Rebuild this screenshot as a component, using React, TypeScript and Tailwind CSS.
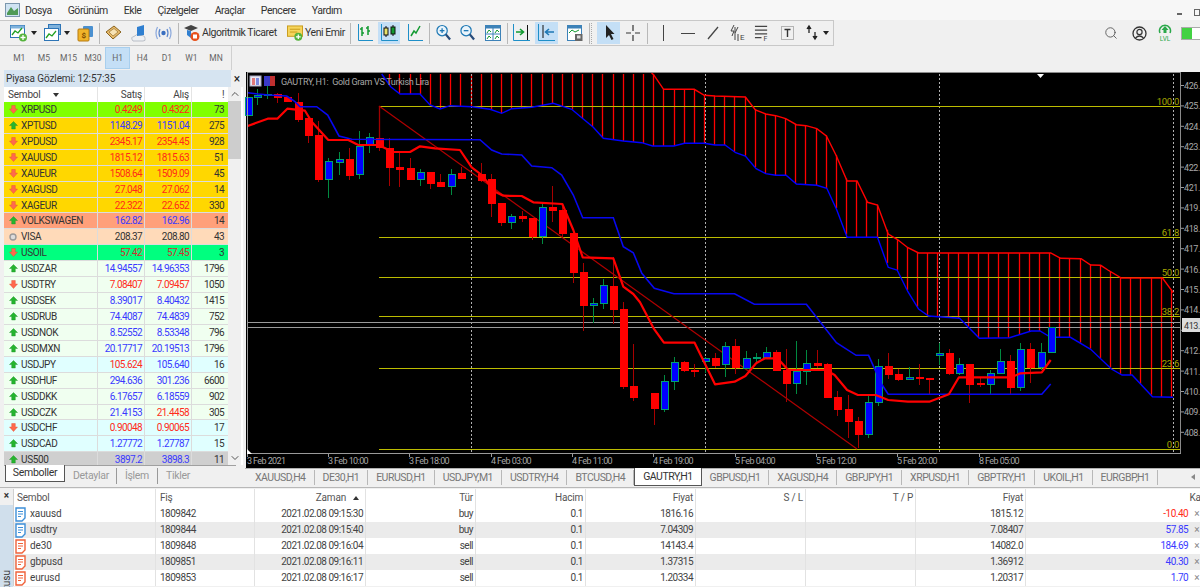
import React from 'react';
import { ChevronUp, ChevronDown, Search } from 'lucide-react';

type Pt = [number, number];
type Dir = 'up' | 'down' | 'flat';

const z7 = (p: Pt[]): Pt[] => p.map(([x, y]) => [245 + x / 3, 70 + y / 3]);
const z9 = (p: Pt[]): Pt[] => p.map(([x, y]) => [640 + x / 2.8, 270 + y / 3]);
const z10 = (p: Pt[]): Pt[] => p.map(([x, y]) => [640 + x / 2.8, 70 + y / 3]);
const line = (p: Pt[]) => p.map(([x, y]) => `${x.toFixed(1)},${y.toFixed(1)}`).join(' ');

const kijun: Pt[] = [
  ...z7([[8, 68], [40, 72], [70, 75], [125, 78], [150, 95], [165, 110], [215, 110], [248, 135], [282, 198], [320, 208], [705, 209], [740, 240], [770, 252], [830, 255], [860, 288], [920, 293], [950, 315], [985, 375], [1013, 443], [1105, 443], [1135, 530], [1165, 548]]),
  ...z9([[5, 10], [40, 55], [95, 71], [265, 71], [320, 103], [466, 103], [550, 218], [605, 256], [640, 256], [675, 340], [695, 373], [1125, 373], [1150, 342]]),
];

const tenkan: Pt[] = [
  ...z7([[8, 168], [68, 146], [97, 146], [127, 116], [180, 122], [200, 155], [250, 210], [310, 210], [340, 225], [400, 225], [445, 246], [495, 246], [525, 229], [570, 235], [645, 240], [680, 292], [710, 315], [750, 365], [775, 377], [830, 378], [865, 397], [952, 402], [985, 480], [1013, 562], [1105, 565], [1135, 650], [1165, 672]]),
  ...z9([[0, 97], [38, 175], [67, 218], [153, 218], [210, 343], [265, 335], [295, 318], [325, 280], [350, 265], [385, 265], [415, 300], [520, 300], [545, 315], [580, 360], [610, 375], [660, 375], [695, 390], [750, 395], [810, 395], [865, 373], [893, 322], [1040, 322], [1065, 310], [1125, 307], [1150, 270]]),
];

const spanBlue: Pt[] = [
  ...z7([[410, 12], [437, 50], [465, 72], [525, 72], [555, 105], [585, 117], [615, 107], [680, 110], [735, 118], [770, 130], [800, 116], [860, 112], [925, 100], [980, 118], [1015, 147], [1045, 172], [1075, 205], [1135, 213], [1190, 218]]),
  ...z10([[35, 228], [95, 228], [125, 220], [180, 220], [210, 225], [238, 225], [268, 248], [295, 258], [325, 296], [352, 311], [380, 316], [409, 316], [438, 342], [495, 346], [523, 355], [551, 420], [580, 502], [665, 502], [695, 592]]),
  ...z9([[720, 0], [750, 65], [780, 117], [808, 138], [895, 145], [950, 205], [1035, 203], [1095, 183], [1120, 183], [1150, 202], [1205, 202], [1262, 238], [1320, 297], [1350, 315], [1378, 315], [1435, 380], [1493, 382]]),
];

const spanRed: Pt[] = [
  [651.5, 73],
  ...z10([[38, 14], [66, 58], [152, 58], [180, 76], [210, 78], [295, 81], [323, 120], [352, 132], [380, 137], [408, 146], [438, 164], [465, 167], [495, 176], [522, 198], [550, 258], [580, 333], [608, 333], [637, 397], [665, 405], [695, 492], [720, 508], [750, 533], [780, 549], [1150, 549], [1178, 565], [1235, 566], [1262, 585], [1290, 586]]),
  ...z9([[1310, 0], [1348, 24], [1463, 24], [1493, 68]]),
];

// y on a polyline at x, for the cloud hatching
function yAt(p: Pt[], x: number) {
  for (let i = 1; i < p.length; i++) {
    if (x <= p[i][0]) {
      const [x0, y0] = p[i - 1];
      const [x1, y1] = p[i];
      return y0 + ((y1 - y0) * (x - x0)) / (x1 - x0);
    }
  }
  return p[p.length - 1][1];
}

const hatches = Array.from({ length: 78 }, (_, i) => 389.3 + i * 10.15).map((x) => {
  const top = x < 651 ? 74 : Math.max(74, yAt(spanRed, x));
  return { x: Math.round(x) + 0.5, top, bottom: yAt(spanBlue, x) };
});

// x, body top, body bottom, wick top, wick bottom
type C = [number, number, number, number, number];
const c7: C[] = [
  [10, 82, 135, 82, 135], [37, 75, 82, 58, 106], [67, 72, 75, 48, 88], [97, 72, 82, 70, 100], [127, 82, 95, 80, 97], [158, 97, 147, 68, 155],
  [189, 145, 197, 145, 220], [220, 197, 327, 152, 335], [250, 275, 327, 265, 385], [281, 268, 276, 245, 316], [311, 268, 315, 235, 330], [342, 228, 312, 183, 327],
  [372, 203, 223, 188, 250], [403, 205, 233, 205, 243], [433, 234, 291, 205, 347], [463, 291, 297, 250, 352], [494, 294, 328, 265, 330], [525, 306, 327, 297, 348],
  [556, 306, 339, 305, 358], [586, 338, 350, 312, 352], [617, 312, 348, 296, 374], [647, 311, 326, 290, 328], [708, 312, 330, 280, 335], [738, 328, 401, 312, 442],
  [769, 399, 458, 399, 468], [799, 440, 457, 433, 478], [830, 438, 446, 424, 456], [860, 444, 499, 444, 510], [891, 411, 499, 398, 522], [922, 411, 421, 347, 455],
  [952, 420, 490, 410, 500], [983, 490, 608, 490, 638],
];
const c8: C[] = [
  [1013, 7, 107, -20, 182], [1044, 100, 106, 85, 160], [1074, 47, 101, 28, 116], [1105, 48, 119, -40, 162], [1135, 118, 350, 97, 357], [1165, 348, 383, 222, 392],
];
const c9: C[] = [
  [10, 370, 385, 342, 430], [39, 370, 416, 370, 465], [68, 333, 418, 315, 425], [96, 278, 334, 262, 360], [124, 278, 302, 272, 306], [152, 300, 304, 282, 320],
  [181, 265, 274, 260, 310], [210, 266, 285, 250, 295], [238, 229, 284, 215, 320], [267, 228, 293, 208, 312], [296, 265, 294, 243, 298], [324, 262, 264, 250, 280],
  [352, 246, 262, 230, 265], [381, 246, 300, 240, 300], [409, 300, 340, 238, 396], [438, 305, 340, 213, 372], [466, 280, 304, 240, 345], [495, 281, 285, 240, 295],
  [523, 283, 381, 278, 382], [552, 381, 418, 362, 438], [581, 418, 455, 375, 505], [609, 453, 492, 440, 535], [638, 398, 492, 378, 503], [666, 288, 398, 266, 407],
  [695, 288, 314, 250, 326], [723, 312, 329, 296, 332], [752, 322, 328, 292, 330], [780, 322, 326, 283, 345], [808, 325, 329, 325, 372], [837, 251, 257, 220, 285],
  [865, 250, 310, 238, 315], [894, 284, 310, 265, 315], [922, 283, 342, 283, 400], [951, 340, 344, 325, 350], [979, 311, 343, 300, 372], [1008, 274, 310, 238, 312],
  [1036, 274, 351, 256, 372], [1065, 239, 351, 220, 362], [1093, 238, 291, 218, 340], [1122, 248, 291, 218, 300], [1151, 173, 247, 173, 250],
];
const upIdx7 = new Set([10, 37, 67, 250, 281, 342, 372, 525, 617, 799, 891]);
const upIdx8 = new Set([1044, 1074]);
const upIdx9 = new Set([10, 68, 96, 181, 238, 296, 324, 352, 438, 466, 638, 666, 752, 837, 894, 979, 1008, 1065, 1122, 1151]);

const candles = [
  ...c7.map(([x, a, b, c, d]) => ({ x: Math.round(245 + x / 3), bt: 70 + a / 3, bb: 70 + b / 3, wt: 70 + c / 3, wb: 70 + d / 3, up: upIdx7.has(x) })),
  ...c8.map(([x, a, b, c, d]) => ({ x: Math.round(245 + x / 3), bt: 270 + a / 3, bb: 270 + b / 3, wt: 270 + c / 3, wb: 270 + d / 3, up: upIdx8.has(x) })),
  ...c9.slice(1).map(([x, a, b, c, d]) => ({ x: Math.round(640 + x / 2.8), bt: 270 + a / 3, bb: 270 + b / 3, wt: 270 + c / 3, wb: 270 + d / 3, up: upIdx9.has(x) })),
];

const fibs: [number, string][] = [[106, '100.0'], [237, '61.8'], [277.5, '50.0'], [316, '38.2'], [368.5, '23.6'], [449.5, '0.0']];
const prices = ['426.', '425.', '424.', '423.', '422.', '421.', '419.', '418.', '417.', '416.', '415.', '414.', '', '412.', '411.', '410.', '409.', '408.'];
const times: [number, string][] = [[247, '3 Feb 2021'], [328, '3 Feb 10:00'], [409, '3 Feb 18:00'], [491, '4 Feb 03:00'], [572, '4 Feb 11:00'], [653, '4 Feb 19:00'], [735, '5 Feb 04:00'], [816, '5 Feb 12:00'], [897, '5 Feb 20:00'], [979, '8 Feb 05:00']];

function Chart() {
  return (
    <svg viewBox="245 70 955 398" className="block w-[955px] h-[398px] bg-black" fontFamily="Roboto, sans-serif">
      <rect x="245" y="70" width="955" height="2" fill="#f0f0f0" />
      <rect x="245" y="70" width="1" height="398" fill="#f0f0f0" />
      {hatches.map((h) => (
        <line key={h.x} x1={h.x} x2={h.x} y1={h.top} y2={h.bottom} stroke="#ff0000" strokeWidth="1.3" />
      ))}
      <g shapeRendering="crispEdges">
        {[471.5, 705.5, 939.5, 1173.5].map((x) => (
          <line key={x} x1={x} x2={x} y1="74" y2="453" stroke="#b0b0b0" strokeDasharray="2 2" />
        ))}
        {fibs.map(([y]) => (
          <line key={y} x1="379" x2="1180" y1={Math.floor(y) + 0.5} y2={Math.floor(y) + 0.5} stroke="#bcbc00" />
        ))}
        <line x1="247" x2="1180" y1="322.5" y2="322.5" stroke="#9a9a9a" />
        <line x1="247" x2="1180" y1="327.5" y2="327.5" stroke="#9a9a9a" />
      </g>
      <line x1="379.5" x2="379.5" y1="106" y2="140" stroke="#a00000" strokeWidth="1.3" />
      <line x1="379" y1="106" x2="857" y2="449" stroke="#b00000" strokeWidth="1.2" />
      <polyline points={line(spanRed)} fill="none" stroke="#ff0000" strokeWidth="1.4" />
      <polyline points={line(spanBlue)} fill="none" stroke="#0000ff" strokeWidth="1.4" />
      <g shapeRendering="crispEdges">
        {candles.map((c) => (
          <line key={`w${c.x}`} x1={c.x + 0.5} x2={c.x + 0.5} y1={c.wt} y2={c.wb} stroke={c.up ? '#008a40' : '#a80000'} />
        ))}
        {candles.map((c) => (
          <rect
            key={c.x}
            x={c.x - 3}
            y={c.bt}
            width="7"
            height={Math.max(c.bb - c.bt, 1)}
            fill={c.up ? '#0000ff' : '#ff0000'}
            stroke={c.up ? '#00a070' : '#ff0000'}
          />
        ))}
      </g>
      <polyline points={line(kijun)} fill="none" stroke="#0808f0" strokeWidth="1.6" />
      <polyline points={line(tenkan)} fill="none" stroke="#ff0000" strokeWidth="2.2" strokeLinejoin="round" />

      {/* title */}
      <rect x="250" y="76" width="11" height="10" fill="#e8e8f4" stroke="#a8a8c0" />
      <rect x="252" y="78" width="3" height="7" fill="#e07a7a" />
      <rect x="256" y="78" width="3" height="7" fill="#7a8ae0" />
      <rect x="264" y="76" width="6" height="10" fill="#3a3ac8" />
      <rect x="270" y="76" width="5" height="10" fill="#c03030" />
      <text x="281" y="85" fontSize="9" letterSpacing="-0.3" fill="#a8a8a8">{'GAUTRY, H1:\u00a0\u00a0Gold Gram VS Turkish Lira'}</text>
      <polygon points="1037,74 1044,74 1040.5,78" fill="#ffffff" />

      {fibs.map(([y, t]) => (
        <text key={t} x="1179" y={Math.floor(y) - 1} fontSize="9.5" letterSpacing="-0.3" textAnchor="end" fill="#a8a800">{t}</text>
      ))}

      {/* axes */}
      <rect x="247" y="72" width="933" height="1" fill="#8a8a8a" />
      <rect x="247" y="72" width="1" height="382" fill="#9a9a9a" />
      <rect x="1180" y="72" width="1" height="382" fill="#8a8a8a" />
      <rect x="247" y="453" width="934" height="1" fill="#9a9a9a" />
      {prices.map((p, i) => (
        <g key={i}>
          <rect x="1181" y={85 + i * 20.4} width="3" height="1" fill="#9a9a9a" />
          {p && <text x="1184" y={89 + i * 20.4} fontSize="9" letterSpacing="-0.4" fill="#a8a8a8">{p}</text>}
        </g>
      ))}
      <rect x="1182" y="318" width="18" height="14" fill="#dcdcdc" />
      <text x="1184" y="328.5" fontSize="9" letterSpacing="-0.4" fill="#333333">413.</text>
      {times.map(([x, t]) => (
        <g key={t}>
          <rect x={x} y="454" width="1" height="3" fill="#9a9a9a" />
          <text x={x} y="464" fontSize="9" letterSpacing="-0.6" fill="#a8a8a8">{t}</text>
        </g>
      ))}
      <polygon points="247,449 247,454 252,454" fill="#ffffff" />
    </svg>
  );
}

/* toolbar drawings */
function Ico({ children, w = 18 }: { children: React.ReactNode; w?: number }) {
  return (
    <svg width={w} height="18" viewBox={`0 0 ${w} 18`} fill="none" className="block">
      {children}
    </svg>
  );
}

function ChartFrame({ plus }: { plus?: boolean }) {
  return (
    <Ico>
      {!plus && <rect x="4.5" y="0.5" width="12" height="10" fill="#7fb2dc" stroke="#2e75b6" />}
      <rect x="0.5" y={plus ? 1.5 : 4.5} width="14" height="12" fill="#fff" stroke="#2e75b6" />
      {plus && <rect x="0.5" y="1.5" width="14" height="3" fill="#7fb2dc" />}
      <path d={plus ? 'M2 11 L5 7 L8 9 L12 4' : 'M2 14 L5 10 L8 12 L12 7'} stroke="#22a022" strokeWidth="1.3" />
      {plus && (
        <>
          <circle cx="13" cy="13.5" r="4" fill="#55b33c" />
          <path d="M13 11 V16 M10.5 13.5 H15.5" stroke="#fff" strokeWidth="1.3" />
        </>
      )}
    </Ico>
  );
}

function Caret() {
  return <span className="block w-0 h-0 border-x-[3px] border-x-transparent border-t-[4px] border-t-[#222]" />;
}

function Sep({ cls }: { cls: string }) {
  return <div className={`w-px h-[21px] bg-[#b8b8b8] ${cls}`} />;
}

function Slot({ cls, children, hl }: { cls: string; children?: React.ReactNode; hl?: boolean }) {
  return (
    <div className={`flex items-center justify-center shrink-0 h-[22px] ${hl ? 'bg-[#c4dff6]' : ''} ${cls}`}>{children}</div>
  );
}

const BarsStroke = '#1e8fc8';

function MainToolbar() {
  return (
    <div className="flex h-[26px] w-[834px] items-center pl-[10px] border-t border-b border-r border-[#c8c8c8] bg-[#f0f0f0] text-[#333] text-[10.5px] tracking-[-0.45px]">
      <Slot cls="w-[18px]"><ChartFrame plus /></Slot>
      <Slot cls="w-[10px] ml-[1px]"><Caret /></Slot>
      <Slot cls="w-[19px] ml-[4px]"><ChartFrame plus={false} /></Slot>
      <Slot cls="w-[10px]"><Caret /></Slot>
      <Slot cls="w-[17px] ml-[5px]">
        <Ico w={17}>
          <rect x="6" y="2" width="10" height="11" rx="1" fill="#4a90d0" />
          <rect x="1" y="5" width="11" height="12" rx="1" fill="#f0b429" stroke="#b77a10" />
          <text x="6.5" y="14" fontSize="8" textAnchor="middle" fill="#7a4a00" fontWeight="700">$</text>
        </Ico>
      </Slot>
      <Sep cls="ml-[5px]" />
      <Slot cls="w-[17px] ml-[5px]">
        <Ico w={17}>
          <path d="M1 8 L9 2 L16 8 L8 15 Z" fill="#e6b96a" stroke="#8a6420" />
          <path d="M4 8 L9 4.5 L13 8 L8 12 Z" fill="#f8e3b4" stroke="#8a6420" strokeWidth="0.6" />
        </Ico>
      </Slot>
      <Slot cls="w-[18px] ml-[8px]">
        <Ico>
          <path d="M3 17 Q0 13 4 12.5 Q6 9.5 10 11.5 Q15 11 15 14.5 Q16 17 13 17 Z" fill="#eef0f3" stroke="#b9bec6" />
          <path d="M7 3 L14 1 V11 L7 12 Z" fill="#2f7fd0" />
        </Ico>
      </Slot>
      <Slot cls="w-[17px] ml-[7px]">
        <Ico w={17}>
          <circle cx="8.5" cy="9" r="2.2" fill="#3a6fc0" />
          <path d="M5 5 Q3 9 5 13 M12 5 Q14 9 12 13" stroke="#5a86cc" strokeWidth="1.2" />
          <path d="M2.5 3 Q-0.5 9 2.5 15 M14.5 3 Q17.5 9 14.5 15" stroke="#8aa8dc" strokeWidth="1.2" />
        </Ico>
      </Slot>
      <Sep cls="ml-[6px]" />
      <Slot cls="w-[16px] ml-[5px]">
        <Ico w={16}>
          <path d="M0 4 L7 1 L14 4 L7 7 Z" fill="#444" />
          <path d="M3 6 V11 L7 14 V7 Z" fill="#2f7fd0" />
          <circle cx="11" cy="12.5" r="4.5" fill="#e8501a" />
          <rect x="9" y="10.5" width="4" height="4" fill="#fff" />
        </Ico>
      </Slot>
      <span className="ml-[2px] w-[76px] whitespace-nowrap shrink-0">Algoritmik Ticaret</span>
      <Slot cls="w-[16px] ml-[9px]">
        <Ico w={17}>
          <rect x="0.5" y="1.5" width="16" height="11" fill="#f6d55c" stroke="#c79a18" />
          <path d="M3 5 H14 M3 8 H11" stroke="#c79a18" />
          <circle cx="12" cy="13" r="4.2" fill="#55b33c" />
          <path d="M12 10.5 V15.5 M9.5 13 H14.5" stroke="#fff" strokeWidth="1.3" />
        </Ico>
      </Slot>
      <span className="ml-[2px] w-[39px] whitespace-nowrap shrink-0">Yeni Emir</span>
      <Sep cls="ml-[6px]" />
      <Slot cls="w-[15px] ml-[7px]">
        <Ico w={15}>
          <path d="M4 3 V12 M2 5 H4 M4 9 H6 M10 2 V11 M8 4 H10 M10 7 H12" stroke="#129a30" strokeWidth="1.5" />
          <path d="M0.5 0 V16.5 H15" stroke={BarsStroke} />
        </Ico>
      </Slot>
      <Slot cls="w-[22px] ml-[5px]" hl>
        <Ico w={17}>
          <path d="M5 2 V13 M12 1 V12" stroke="#111" />
          <rect x="3" y="4" width="4" height="7" fill="#e9e36a" stroke="#111" />
          <rect x="10" y="3" width="4" height="7" fill="#129a30" stroke="#111" />
          <path d="M0.5 0 V16.5 H17" stroke={BarsStroke} />
        </Ico>
      </Slot>
      <Slot cls="w-[15px] ml-[8px]">
        <Ico w={15}>
          <path d="M3 12 L6 7 L8 9 L12 2" stroke="#129a30" strokeWidth="1.5" />
          <path d="M0.5 0 V16.5 H15" stroke={BarsStroke} />
        </Ico>
      </Slot>
      <Sep cls="ml-[6px]" />
      {['+', '-'].map((s, i) => (
        <Slot key={s} cls={`w-[15px] ${i === 0 ? 'ml-[6px]' : 'ml-[9px]'}`}>
          <Ico w={16}>
            <circle cx="6.5" cy="6.5" r="5.5" fill="#eaf4fb" stroke="#1e78b4" strokeWidth="1.3" />
            <path d="M4 6.5 H9" stroke="#1e78b4" strokeWidth="1.4" />
            {s === '+' && <path d="M6.5 4 V9" stroke="#1e78b4" strokeWidth="1.4" />}
            <path d="M10.5 10.5 L15 16" stroke="#274b7a" strokeWidth="2.4" />
          </Ico>
        </Slot>
      ))}
      <Slot cls="w-[16px] ml-[10px]">
        <Ico w={16}>
          <rect x="0.5" y="1.5" width="15" height="15" fill="#fff" stroke="#3d82b8" />
          <rect x="0.5" y="1.5" width="15" height="3" fill="#3d82b8" />
          <path d="M8 4 V16 M1 10 H15" stroke="#3d82b8" />
          <path d="M2 9 L4 6 L6 8 M10 9 L12 6 L14 8 M2 15 L4 12 L6 14 M10 15 L12 12 L14 14" stroke="#129a30" />
        </Ico>
      </Slot>
      <Sep cls="ml-[6px]" />
      <Slot cls="w-[17px] ml-[5px]">
        <Ico w={17}>
          <path d="M3 8 H10 M7 5 L10.5 8 L7 11" stroke="#129a30" strokeWidth="1.6" />
          <path d="M14.5 1 V16" stroke="#111" />
          <path d="M0.5 0 V16.5 H17" stroke={BarsStroke} />
        </Ico>
      </Slot>
      <Slot cls="w-[23px] ml-[5px]" hl>
        <Ico w={17}>
          <path d="M16 8 H8 M11 5 L7.5 8 L11 11" stroke="#1e78b4" strokeWidth="1.6" />
          <path d="M5 1 V14" stroke="#111" />
          <path d="M0.5 0 V16.5 H17" stroke={BarsStroke} />
        </Ico>
      </Slot>
      <Slot cls="w-[16px] ml-[9px]">
        <Ico w={16}>
          <rect x="0.5" y="1.5" width="14" height="15" fill="#fff" stroke="#3d82b8" />
          <rect x="0.5" y="1.5" width="14" height="3" fill="#3d82b8" />
          <path d="M2 9 L5 6 L8 8 L12 6" stroke="#129a30" />
          <rect x="8" y="10" width="7.5" height="7" fill="#666" />
          <rect x="10" y="11.5" width="3.5" height="3" fill="#ddd" />
        </Ico>
      </Slot>
      <Sep cls="ml-[6px]" />
      <div className="w-px h-[21px] border-l border-dotted border-[#aaa] ml-px" />
      <Slot cls="w-[23px] ml-[5px]" hl>
        <Ico w={12}>
          <path d="M3 1 L3 14 L6 11 L8.5 16 L10.5 15 L8 10 L11.5 10 Z" fill="#222" />
        </Ico>
      </Slot>
      <Slot cls="w-[16px] ml-[5px]">
        <Ico w={16}>
          <path d="M8 1 V7 M8 11 V17 M1 9 H6 M10 9 H15" stroke="#333" strokeWidth="1.2" />
        </Ico>
      </Slot>
      <Sep cls="ml-[6px]" />
      <Slot cls="w-[14px] ml-[8px]"><div className="w-px h-[16px] bg-[#444]" /></Slot>
      <Slot cls="w-[14px] ml-[11px]"><div className="w-[14px] h-px bg-[#444]" /></Slot>
      <Slot cls="w-[12px] ml-[12px]">
        <Ico w={12}><path d="M1 15 L11 3" stroke="#444" strokeWidth="1.3" /></Ico>
      </Slot>
      <Slot cls="w-[16px] ml-[11px]">
        <Ico w={16}>
          <path d="M4 1 L1 7 H4 L2 12 M8 3 L5 9 M5 3 V16 M8 10 V17" stroke="#444" />
          <text x="10" y="16" fontSize="8" fill="#444">E</text>
        </Ico>
      </Slot>
      <Slot cls="w-[15px] ml-[8px]">
        <Ico w={16}>
          <path d="M1 2 H14 M1 6 H14 M1 10 H14 M1 14 H8" stroke="#444" strokeWidth="1.3" />
          <text x="10" y="18" fontSize="7.5" fill="#444">F</text>
        </Ico>
      </Slot>
      <Slot cls="w-[13px] ml-[12px]">
        <Ico w={13}>
          <rect x="0.5" y="2.5" width="12" height="13" stroke="#777" strokeDasharray="1 1" />
          <path d="M3.5 5.5 H9.5 M6.5 5.5 V13" stroke="#333" strokeWidth="1.4" />
        </Ico>
      </Slot>
      <Slot cls="w-[12px] ml-[12px]">
        <Ico w={12}>
          <path d="M3 9 V4 M1 5 L3 2 L5 5" stroke="#222" strokeWidth="1.3" fill="#222" />
          <path d="M9 8 V13 M7 12 L9 15 L11 12" stroke="#222" strokeWidth="1.3" fill="#222" />
        </Ico>
      </Slot>
      <Slot cls="w-[8px] ml-[4px]"><Caret /></Slot>
    </div>
  );
}

const frames = ['M1', 'M5', 'M15', 'M30', 'H1', 'H4', 'D1', 'W1', 'MN'];

function FrameBar() {
  return (
    <div className="flex h-[24px] w-[232px] items-center pl-[7px] border-r border-[#d0d0d0] text-[8.5px] text-[#666]">
      {frames.map((f) => (
        <div
          key={f}
          className={`w-[24.6px] h-[22px] flex items-center justify-center ${f === 'H1' ? 'bg-[#c4dff6] border border-[#a8cfee]' : ''}`}
        >
          {f}
        </div>
      ))}
    </div>
  );
}

/* market watch */
const rowColors = {
  lime: 'bg-[#80ff00]',
  gold: 'bg-[#ffd700]',
  salmon: 'bg-[#ffa07a]',
  peach: 'bg-[#ffdab9]',
  spring: 'bg-[#00ff7f]',
  honey: 'bg-[#f0fff0]',
  cyan: 'bg-[#e0ffff]',
  grey: 'bg-[#cfcfcf]',
};

type Quote = { s: string; b: string; a: string; n: string; d: Dir; bg: keyof typeof rowColors; bc: string; ac: string };
const R = 'text-[#ff2a1a]';
const B = 'text-[#3a3aff]';
const K = 'text-[#333]';

const quotes: Quote[] = [
  { s: 'XRPUSD', b: '0.4249', a: '0.4322', n: '73', d: 'down', bg: 'lime', bc: R, ac: R },
  { s: 'XPTUSD', b: '1148.29', a: '1151.04', n: '275', d: 'up', bg: 'gold', bc: B, ac: B },
  { s: 'XPDUSD', b: '2345.17', a: '2354.45', n: '928', d: 'down', bg: 'gold', bc: R, ac: R },
  { s: 'XAUUSD', b: '1815.12', a: '1815.63', n: '51', d: 'down', bg: 'gold', bc: R, ac: R },
  { s: 'XAUEUR', b: '1508.64', a: '1509.09', n: '45', d: 'down', bg: 'gold', bc: R, ac: R },
  { s: 'XAGUSD', b: '27.048', a: '27.062', n: '14', d: 'down', bg: 'gold', bc: R, ac: R },
  { s: 'XAGEUR', b: '22.322', a: '22.652', n: '330', d: 'down', bg: 'gold', bc: R, ac: R },
  { s: 'VOLKSWAGEN', b: '162.82', a: '162.96', n: '14', d: 'up', bg: 'salmon', bc: B, ac: B },
  { s: 'VISA', b: '208.37', a: '208.80', n: '43', d: 'flat', bg: 'peach', bc: K, ac: K },
  { s: 'USOIL', b: '57.42', a: '57.45', n: '3', d: 'down', bg: 'spring', bc: 'text-[#d03030]', ac: 'text-[#d03030]' },
  { s: 'USDZAR', b: '14.94557', a: '14.96353', n: '1796', d: 'up', bg: 'honey', bc: B, ac: B },
  { s: 'USDTRY', b: '7.08407', a: '7.09457', n: '1050', d: 'down', bg: 'honey', bc: R, ac: R },
  { s: 'USDSEK', b: '8.39017', a: '8.40432', n: '1415', d: 'up', bg: 'honey', bc: B, ac: B },
  { s: 'USDRUB', b: '74.4087', a: '74.4839', n: '752', d: 'up', bg: 'honey', bc: B, ac: B },
  { s: 'USDNOK', b: '8.52552', a: '8.53348', n: '796', d: 'up', bg: 'honey', bc: B, ac: B },
  { s: 'USDMXN', b: '20.17717', a: '20.19513', n: '1796', d: 'up', bg: 'honey', bc: B, ac: B },
  { s: 'USDJPY', b: '105.624', a: '105.640', n: '16', d: 'up', bg: 'cyan', bc: R, ac: B },
  { s: 'USDHUF', b: '294.636', a: '301.236', n: '6600', d: 'up', bg: 'honey', bc: B, ac: B },
  { s: 'USDDKK', b: '6.17657', a: '6.18559', n: '902', d: 'up', bg: 'honey', bc: B, ac: B },
  { s: 'USDCZK', b: '21.4153', a: '21.4458', n: '305', d: 'up', bg: 'honey', bc: B, ac: R },
  { s: 'USDCHF', b: '0.90048', a: '0.90065', n: '17', d: 'down', bg: 'cyan', bc: R, ac: R },
  { s: 'USDCAD', b: '1.27772', a: '1.27787', n: '15', d: 'up', bg: 'cyan', bc: B, ac: B },
  { s: 'US500', b: '3897.2', a: '3898.3', n: '11', d: 'up', bg: 'grey', bc: B, ac: B },
];

function Arrow({ d }: { d: Dir }) {
  if (d === 'flat') {
    return (
      <svg width="8" height="8" viewBox="0 0 8 8" className="block">
        <circle cx="4" cy="4" r="3" fill="#dcdcdc" stroke="#9a9a9a" strokeWidth="1.4" />
      </svg>
    );
  }
  return (
    <svg width="9" height="9" viewBox="0 0 9 9" className="block">
      {d === 'up' ? (
        <polygon points="4.5,0.5 8.5,4.5 6.3,4.5 6.3,8 2.7,8 2.7,4.5 0.5,4.5" fill="#25b52e" stroke="#1a8f24" strokeWidth="0.4" />
      ) : (
        <polygon points="2.7,0.5 6.3,0.5 6.3,4 8.5,4 4.5,8.5 0.5,4 2.7,4" fill="#ff6a4d" stroke="#e04a30" strokeWidth="0.4" />
      )}
    </svg>
  );
}

const mwCols = 'grid grid-cols-[94px_47px_47px_36px] items-center';

function MarketWatch() {
  return (
    <div className="w-[245px] shrink-0 flex flex-col pl-[4px] pr-[2px] h-full">
      <div className="h-[17px] flex items-center">
        <div className="flex-1 h-full flex items-center bg-[#d6e4f1] pl-[2px] text-[10px] tracking-[-0.1px] text-[#333]">
          Piyasa Gözlemi: 12:57:35
        </div>
        <div className="w-[12px] text-center text-[12px] leading-[12px] text-[#222]">×</div>
      </div>
      <div className="flex flex-1 min-h-0 bg-white">
        <div className="w-[224px] shrink-0 overflow-hidden text-[10px] tracking-[-0.6px]">
          <div className={`h-[15px] ${mwCols} text-[#444] bg-white`}>
            <div className="pl-[4px] flex items-center gap-[12px] border-r border-[#e4e4e4] h-full tracking-[-0.2px]">
              Sembol
              <span className="block w-0 h-0 border-x-[3px] border-x-transparent border-t-[4px] border-t-[#333]" />
            </div>
            <div className="text-right pr-[2px] border-r border-[#e4e4e4] h-full leading-[15px] tracking-[-0.2px]">Satış</div>
            <div className="text-right pr-[2px] border-r border-[#e4e4e4] h-full leading-[15px] tracking-[-0.2px]">Alış</div>
            <div className="text-right pr-[4px] h-full leading-[15px]">!</div>
          </div>
          {quotes.map((q) => (
            <div key={q.s} className={`h-[15.93px] leading-[15px] ${mwCols} border-b border-[#dcdcdc] ${rowColors[q.bg]}`}>
              <div className="pl-[4px] flex items-center gap-[3px] text-[#333] border-r border-[#dcdcdc] h-full tracking-[-0.35px]">
                <span className="w-[10px] flex justify-center"><Arrow d={q.d} /></span>
                {q.s}
              </div>
              <div className={`text-right pr-[2px] border-r border-[#dcdcdc] h-full ${q.bc}`}>{q.b}</div>
              <div className={`text-right pr-[2px] border-r border-[#dcdcdc] h-full ${q.ac}`}>{q.a}</div>
              <div className="text-right pr-[4px] text-[#333] h-full">{q.n}</div>
            </div>
          ))}
        </div>
        <div className="w-[13px] shrink-0 bg-[#f0f0f0] flex flex-col items-center">
          <ChevronUp size={12} className="text-[#555] my-[1px]" />
          <div className="w-full h-[58px] bg-[#cdcdcd]" />
          <div className="flex-1" />
          <ChevronDown size={12} className="text-[#555] mb-[1px]" />
        </div>
      </div>
      <div className="h-[22px] shrink-0 flex items-start border-t border-[#a0a0a0] text-[10.5px] tracking-[-0.3px] text-[#999] pl-[1px] mr-[7px]">
        <div className="h-[17px] w-[60px] bg-white border-x border-b border-[#555] text-[#333] flex items-center justify-center -mt-px">Semboller</div>
        <div className="ml-[8px] mt-[2px] pr-[7px] border-r border-[#999]">Detaylar</div>
        <div className="ml-[8px] mt-[2px] pr-[8px] border-r border-[#999]">İşlem</div>
        <div className="ml-[8px] mt-[2px]">Tikler</div>
      </div>
    </div>
  );
}

/* chart tabs */
const tabs = ['XAUUSD,H4', 'DE30,H1', 'EURUSD,H1', 'USDJPY,M1', 'USDTRY,H4', 'BTCUSD,H4', 'GAUTRY,H1', 'GBPUSD,H1', 'XAGUSD,H4', 'GBPJPY,H1', 'XRPUSD,H1', 'GBPTRY,H1', 'UKOIL,H1', 'EURGBP,H1'];

function TabBar() {
  return (
    <div className="h-[19px] flex items-start pl-[2px] text-[10.5px] tracking-[-0.5px] text-[#777] border-t border-[#b0b0b0] relative">
      {tabs.map((t) => (
        t === 'GAUTRY,H1' ? (
          <div key={t} className="h-[18px] bg-white border-x border-b border-[#555] text-[#333] px-[8px] flex items-center -mt-px">{t}</div>
        ) : (
          <div key={t} className="mt-[1px] px-[8px] leading-[15px] border-r border-[#b8b8b8] last:border-r-0">{t}</div>
        )
      ))}
      <span className="absolute right-[5px] top-[5px] w-0 h-0 border-y-[3px] border-y-transparent border-r-[4px] border-r-[#888]" />
    </div>
  );
}

/* trades */
type Trade = { s: string; id: string; t: string; ty: string; o: string; c: string; p: string; neg?: boolean };
const trades: Trade[] = [
  { s: 'xauusd', id: '1809842', t: '2021.02.08 09:15:30', ty: 'buy', o: '1816.16', c: '1815.12', p: '-10.40', neg: true },
  { s: 'usdtry', id: '1809844', t: '2021.02.08 09:15:40', ty: 'buy', o: '7.04309', c: '7.08407', p: '57.85' },
  { s: 'de30', id: '1809848', t: '2021.02.08 09:16:04', ty: 'sell', o: '14143.4', c: '14082.0', p: '184.69' },
  { s: 'gbpusd', id: '1809851', t: '2021.02.08 09:16:11', ty: 'sell', o: '1.37315', c: '1.36912', p: '40.30' },
  { s: 'eurusd', id: '1809853', t: '2021.02.08 09:16:17', ty: 'sell', o: '1.20334', c: '1.20317', p: '1.70' },
];

const tradeCols = 'grid grid-cols-[142px_99px_111px_110px_110px_110px_110px_110px_110px_1fr]';
const cellR = 'text-right pr-[2px] border-r border-[#e2e2e2] h-full';

function DocIcon({ buy }: { buy: boolean }) {
  const c = buy ? '#3d8fd8' : '#f0623a';
  return (
    <svg width="11" height="15" viewBox="0 0 11 15" className="block" fill="none">
      <path d="M1 1 H10 V11 L7 14 H1 Z" fill="#fff" stroke={c} strokeWidth="1.4" />
      <path d="M3 4.5 H8 M3 7 H8 M3 9.5 H6" stroke={c} />
    </svg>
  );
}

function TradePanel() {
  return (
    <div className="flex h-[100px] shrink-0 border-t border-[#b8b8b8] pt-[1px]">
      <div className="w-[13px] shrink-0 flex flex-col items-center overflow-hidden">
        <div className="h-[16px] text-[10px] font-bold text-[#333] leading-[13px]">×</div>
        <div className="flex-1 w-full bg-[#d0dfec] relative overflow-hidden">
          <span className="absolute right-0 top-[65px] [writing-mode:vertical-rl] rotate-180 whitespace-nowrap text-[10px] leading-[13px] text-[#333]">Araç Kutusu</span>
        </div>
      </div>
      <div className="flex-1 min-w-0 overflow-hidden bg-white text-[10px] tracking-[-0.5px] text-[#444] h-[97px] border-l border-[#d0d0d0]">
        <div className={`${tradeCols} h-[17px] items-center text-[#555] tracking-[-0.2px]`}>
          <div className="pl-[3px] border-r border-[#e2e2e2] h-full leading-[17px]">Sembol</div>
          <div className="pl-[4px] border-r border-[#e2e2e2] h-full leading-[17px]">Fiş</div>
          <div className="border-r border-[#e2e2e2] h-full flex items-center justify-end gap-[7px] pr-[6px]">
            Zaman
            <span className="block w-0 h-0 border-x-[3px] border-x-transparent border-b-[4px] border-b-[#333]" />
          </div>
          <div className={`${cellR} leading-[17px]`}>Tür</div>
          <div className={`${cellR} leading-[17px]`}>Hacim</div>
          <div className={`${cellR} leading-[17px]`}>Fiyat</div>
          <div className={`${cellR} leading-[17px]`}>S / L</div>
          <div className={`${cellR} leading-[17px]`}>T / P</div>
          <div className={`${cellR} leading-[17px]`}>Fiyat</div>
          <div className="text-right -mr-[4px] h-full leading-[17px]">Kar</div>
        </div>
        {trades.map((r, i) => (
          <div key={r.id} className={`${tradeCols} h-[16px] leading-[16px] ${i % 2 === 1 ? 'bg-[#ebebeb]' : 'bg-white'}`}>
            <div className="flex items-center gap-[4px] pl-[1px] border-r border-[#e2e2e2] h-full tracking-[-0.1px]">
              <DocIcon buy={r.ty === 'buy'} />
              {r.s}
            </div>
            <div className="pl-[4px] border-r border-[#e2e2e2] h-full">{r.id}</div>
            <div className={cellR}>{r.t}</div>
            <div className={cellR}>{r.ty}</div>
            <div className={cellR}>0.1</div>
            <div className={cellR}>{r.o}</div>
            <div className={cellR} />
            <div className={cellR} />
            <div className={cellR}>{r.c}</div>
            <div className="flex justify-end items-center gap-[6px] pr-[1px] h-full">
              <span className={r.neg ? 'text-[#ff2a1a]' : 'text-[#3a3aff]'}>{r.p}</span>
              <span className="text-[#888] text-[10px]">×</span>
            </div>
          </div>
        ))}
      </div>
    </div>
  );
}

const menus = ['Dosya', 'Görünüm', 'Ekle', 'Çizelgeler', 'Araçlar', 'Pencere', 'Yardım'];

export default function App() {
  return (
    <div className="w-[1200px] h-[587px] overflow-hidden flex flex-col bg-[#f0f0f0] font-['Roboto',sans-serif]">
      <div className="h-[20px] shrink-0 flex items-center bg-[#f7f7f7] relative text-[10.5px] tracking-[-0.45px] text-[#333]">
        <div className="w-[25px] flex justify-center">
          <svg width="15" height="14" viewBox="0 0 15 14">
            <rect x="0.5" y="0.5" width="14" height="13" fill="#cfe3f2" stroke="#7c97ad" />
            <path d="M2 10 L6 4 L9 8 L13 5 V12 H2 Z" fill="#4f9a56" />
          </svg>
        </div>
        <div className="flex gap-[16px] pt-[1px]">
          {menus.map((m) => <span key={m}>{m}</span>)}
        </div>
        <span className="absolute right-[18px] top-[13px] w-[5px] h-[2px] bg-[#666]" />
        <span className="absolute right-0 top-[9px] w-[6px] h-[7px] border border-[#666]" />
      </div>
      <div className="h-[26px] shrink-0 flex items-center relative">
        <MainToolbar />
        <div className="flex-1" />
        <div className="flex items-center justify-end">
          <Search size={14} strokeWidth={1.5} className="text-[#555] mr-[14px]" />
          <svg width="15" height="15" viewBox="0 0 15 15" className="mr-[11px]" fill="none">
            <circle cx="7.5" cy="7.5" r="6.5" stroke="#333" strokeWidth="1.3" />
            <circle cx="7.5" cy="6" r="2.6" stroke="#333" strokeWidth="1.2" />
            <path d="M3.5 12 Q7.5 8 11.5 12" stroke="#333" strokeWidth="1.2" />
          </svg>
          <svg width="14" height="20" viewBox="0 0 14 20" className="mr-[9px]" fill="none">
            <path d="M2 10 A5.5 5.5 0 1 1 12 10" stroke="#2aa84a" strokeWidth="1.5" />
            <polygon points="7,3 10.5,7 8.5,7 8.5,10 5.5,10 5.5,7 3.5,7" fill="#2aa84a" />
            <text x="7" y="17.5" fontSize="6.5" textAnchor="middle" fill="#2aa84a">LVL</text>
          </svg>
          <div className="w-[19px] h-[13px] border-y border-l border-[#aaa] bg-white">
            <div className="w-[10px] h-full bg-[#43d243]" />
          </div>
        </div>
      </div>
      <div className="h-[24px] shrink-0"><FrameBar /></div>
      <div className="h-[417px] shrink-0 flex">
        <MarketWatch />
        <div className="flex-1 flex flex-col min-w-0">
          <Chart />
          <TabBar />
        </div>
      </div>
      <TradePanel />
    </div>
  );
}
